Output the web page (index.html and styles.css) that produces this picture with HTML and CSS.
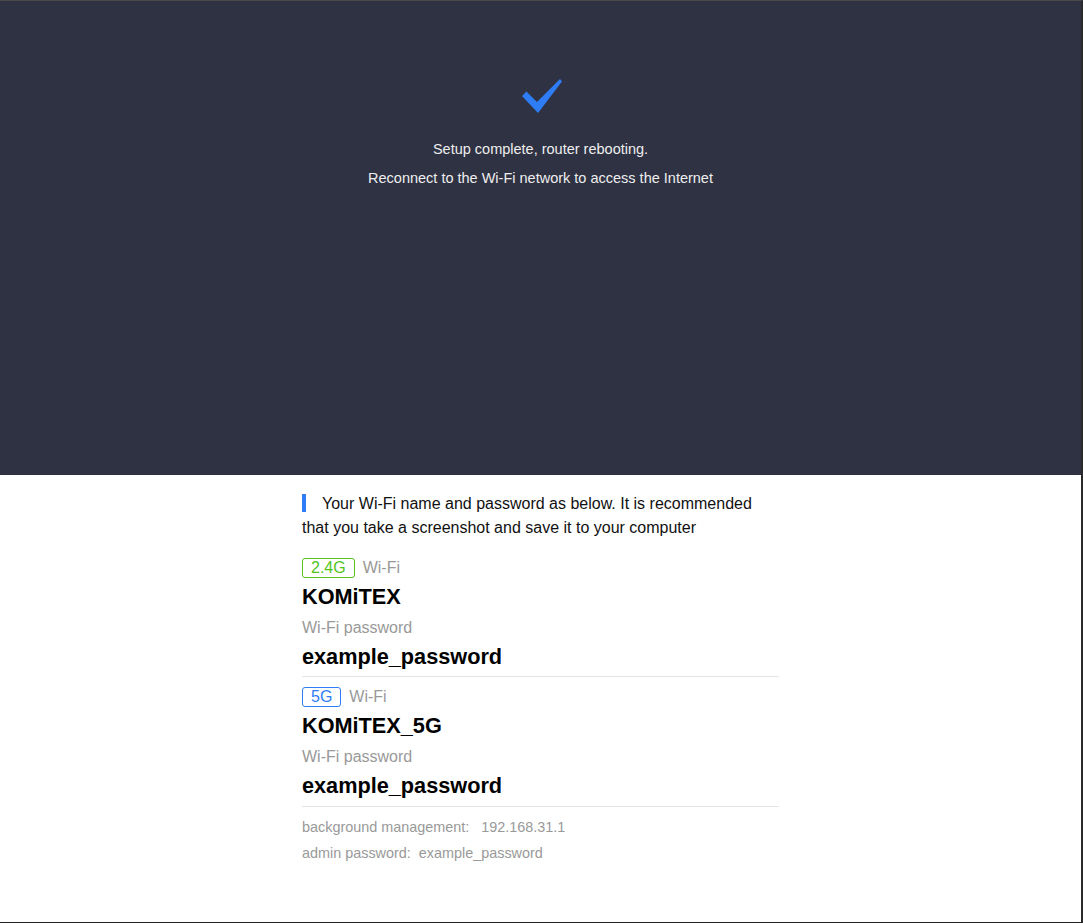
FILE: index.html
```html
<!DOCTYPE html>
<html lang="en">
<head>
	<meta charset="utf-8">
	<title>Setup complete</title>
	<link rel="stylesheet" href="styles.css">
</head>
<body>

<div class="frame">
    <div class="done">
        <svg class="check" width="44" height="40" viewBox="0 0 44 40">
            <polygon points="3,20 7.5,15.5 18,26 41,3 43,5.5 19,37"/>
        </svg>
        <p>Setup complete, router rebooting.</p>
        <p>Reconnect to the Wi-Fi network to access the Internet</p>
    </div>

    <div class="info">
        <div class="note"><i class="bar"></i>Your Wi-Fi name and password as below. It is recommended that you take a screenshot and save it to your computer</div>

        <div class="band first">
            <div class="kind"><span class="tag g24">2.4G</span>Wi-Fi</div>
            <div class="value name">KOMiTEX</div>
            <div class="label">Wi-Fi password</div>
            <div class="value pass">example_password</div>
        </div>

        <div class="band">
            <div class="kind"><span class="tag g5">5G</span>Wi-Fi</div>
            <div class="value name">KOMiTEX_5G</div>
            <div class="label">Wi-Fi password</div>
            <div class="value pass">example_password</div>
        </div>

        <div class="admin">
            <div>background management:&nbsp;&nbsp; 192.168.31.1</div>
            <div>admin password:&nbsp; example_password</div>
        </div>
    </div>
</div>

</body>
</html>
```

FILE: styles.css
```css
html, body { margin: 0; padding: 0; }
body {
    font-family: "Liberation Sans", Arial, sans-serif;
    background: #fff;
}
.frame {
    box-sizing: border-box;
    height: 923px;
    border-top: 1px solid #4a4a4a;
    border-right: 2px solid #2a2a2a;
    border-bottom: 1px solid #222;
    background: #fff;
}

/* dark top panel */
.done {
    height: 474px;
    background: #2e3243;
    padding-top: 75px;
    box-sizing: border-box;
    text-align: center;
    color: #eee;
    font-size: 14.5px;
}
.done .check {
    display: block;
    margin: 0 auto 19px;
    fill: #2f7df6;
}
.done p {
    margin: 0;
    line-height: 29px;
}

/* wifi details */
.info {
    width: 477px;
    margin: 0 auto;
    padding-top: 17px;
    color: #111;
    font-size: 16px;
}
.note { line-height: 24px; }
.note .bar {
    display: inline-block;
    width: 4px;
    height: 18px;
    background: #2f7df6;
    vertical-align: -3px;
    margin-right: 16px;
}
.band {
    border-bottom: 1px solid #e4e4e4;
    padding-top: 9px;
    padding-bottom: 4px;
}
.band.first {
    margin-top: 17px;
    padding-top: 0;
    padding-bottom: 3px;
}
.kind {
    line-height: 22px;
    color: #999;
}
.tag {
    display: inline-block;
    box-sizing: border-box;
    height: 20px;
    line-height: 18px;
    padding: 0 8px;
    border: 1px solid;
    border-radius: 3px;
    margin-right: 8px;
    vertical-align: top;
    margin-top: 1px;
}
.tag.g24 { color: #52c41a; border-color: #52c41a; }
.tag.g5 { color: #2f7df6; border-color: #2f7df6; }
.value {
    font-size: 21.7px;
    font-weight: bold;
    color: #000;
}
.value.name { line-height: 36px; }
.value.pass { line-height: 32px; }
.label {
    line-height: 26px;
    color: #999;
}
.admin {
    padding-top: 7px;
    font-size: 14.4px;
    line-height: 26px;
    color: #999;
}
```
